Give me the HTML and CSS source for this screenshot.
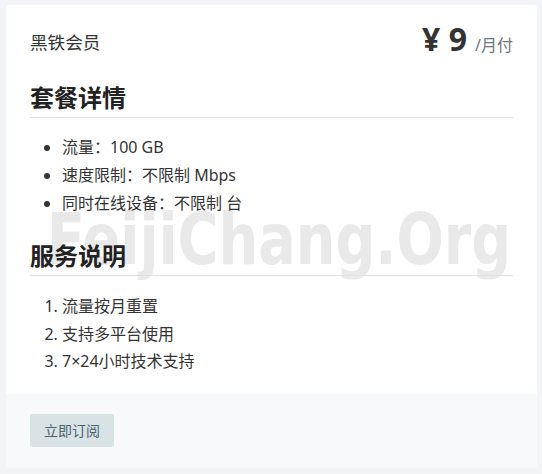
FILE: index.html
```html
<!DOCTYPE html>
<html lang="zh-CN">
<head>
    <meta charset="UTF-8">
    <meta name="viewport" content="width=device-width, initial-scale=1.0">
    <title>黑铁会员</title>
    <link rel="stylesheet" href="styles.css">
</head>
<body>
    <div class="card">
        <div class="card-body">
            <div class="watermark">FeijiChang.Org</div>
            <div class="plan-head">
                <div class="plan-name">黑铁会员</div>
                <div class="plan-price"><span class="amount">¥ 9</span><span class="period">/月付</span></div>
            </div>

            <h3 class="section-title">套餐详情</h3>
            <ul class="detail-list">
                <li>流量：100 GB</li>
                <li>速度限制：不限制 Mbps</li>
                <li>同时在线设备：不限制 台</li>
            </ul>

            <h3 class="section-title">服务说明</h3>
            <ol class="detail-list notes">
                <li>流量按月重置</li>
                <li>支持多平台使用</li>
                <li>7×24小时技术支持</li>
            </ol>
        </div>
        <div class="card-footer">
            <button class="btn-subscribe">立即订阅</button>
        </div>
    </div>
</body>
</html>
```

FILE: styles.css
```css
/* page */
body {
    margin: 5px 5px 0 6px;
    background: #f3f4f8;
    font-family: "Noto Sans", "Noto Sans CJK SC", sans-serif;
    color: #333333;
}

/* card */
.card {
    background: #ffffff;
    border-radius: 3px;
    box-shadow: 0 0 1px rgba(0, 0, 0, 0.06);
    overflow: hidden;
}

.card-body {
    position: relative;
    z-index: 0;
    padding: 24px 24px 18px;
}

/* watermark behind the text */
.watermark {
    position: absolute;
    z-index: -1;
    left: 41px;
    top: 198px;
    font-family: "DejaVu Sans Condensed", "DejaVu Sans", sans-serif;
    font-weight: bold;
    font-size: 72px;
    line-height: 1;
    color: #e9e9e9;
    white-space: nowrap;
    transform: scaleX(0.86);
    transform-origin: left top;
    pointer-events: none;
}

/* name + price */
.plan-head {
    display: flex;
    justify-content: space-between;
    align-items: center;
    height: 26px;
    margin-bottom: 27px;
}

.plan-name {
    font-size: 17.6px;
    line-height: 26px;
}

.plan-price {
    display: flex;
    align-items: baseline;
    line-height: 26px;
}

.amount {
    font-size: 32px;
    font-weight: bold;
    color: #333333;
}

.period {
    margin-left: 8px;
    font-size: 16px;
    color: #6c757d;
}

/* section headings */
.section-title {
    margin: 23px 0 0;
    padding-bottom: 3px;
    border-bottom: 1px solid #dee2e6;
    font-size: 24px;
    line-height: 32px;
    font-weight: bold;
    color: #222222;
}

.plan-head + .section-title {
    margin-top: 0;
}

/* lists */
.detail-list {
    margin: 15px 0 0;
    padding-left: 32px;
    font-size: 16px;
    line-height: 28px;
}

.notes {
    margin-top: 17px;
    line-height: 27.5px;
}

/* footer */
.card-footer {
    background: #f8f9fb;
    padding: 20px 24px 21px;
}

.btn-subscribe {
    height: 33px;
    padding: 0 14px;
    border: none;
    border-radius: 3px;
    background: #d9e2e5;
    color: #4b6272;
    font-family: "Noto Sans", "Noto Sans CJK SC", sans-serif;
    font-size: 14px;
    line-height: 33px;
    cursor: pointer;
}
```
